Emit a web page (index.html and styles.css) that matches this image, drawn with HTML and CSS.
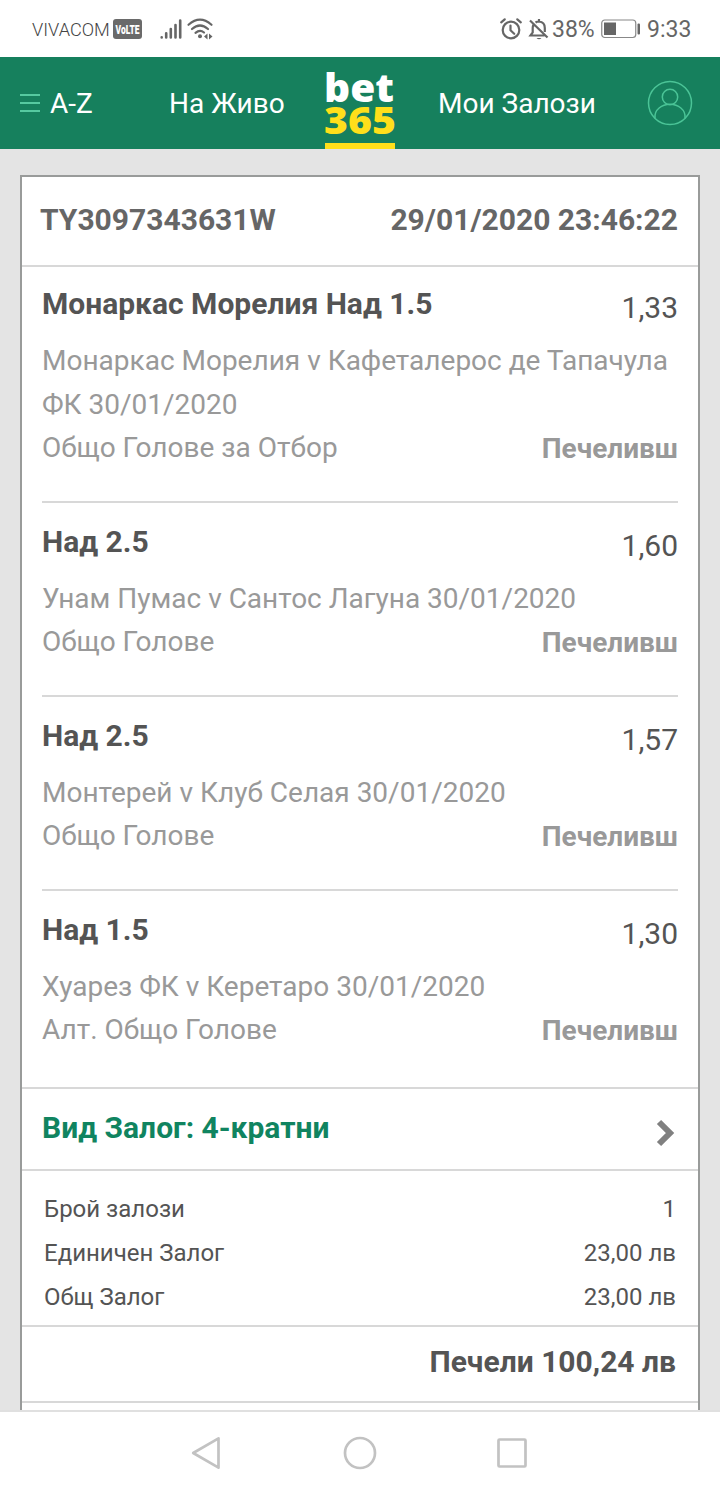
FILE: index.html
```html
<!DOCTYPE html>
<html lang="bg">
<head>
<meta charset="utf-8">
<title>bet365 - Мои Залози</title>
<link rel="stylesheet" href="styles.css">
</head>
<body>
<div class="status">
  <span class="carrier">VIVACOM</span>
  <svg class="volte" width="29" height="20" viewBox="0 0 29 20"><rect width="29" height="20" rx="3" fill="#6a6a6a"/><text x="2.500" y="14.500" textLength="24" lengthAdjust="spacingAndGlyphs" class="volte-text">VoLTE</text></svg>
  <svg class="signal" width="22" height="20" viewBox="0 0 22 20" stroke="#666" stroke-width="2.600" stroke-linecap="round"><path d="M1.700 18.400v.1M6.200 14.300v4.200M10.800 10v8.500M15.500 6v12.500M20.200 1.500v17"/></svg>
  <svg class="wifi" width="27" height="22" viewBox="0 0 27 22" fill="none" stroke="#666" stroke-width="2.200" stroke-linecap="round"><path d="M1.500 6.800Q13 -3.500 24.500 6.800M5 11Q13 4 21 11M8.500 14.800Q13 11 17 14.500"/><circle cx="13" cy="18.300" r="2" fill="#666" stroke="none"/><path fill="#666" stroke="none" d="M17 18.500l3.500-3v6zM22 15.500l3.500 3-3.500 3z"/></svg>
  <span class="spacer"></span>
  <svg class="alarm" width="22" height="22" viewBox="0 0 22 22" fill="none" stroke="#666" stroke-width="2.200" stroke-linecap="round" stroke-linejoin="round"><circle cx="11" cy="12" r="8.300"/><path d="M10.500 7.500v4.800l3.700 3.500M1.200 4.300l3.500-3M20.800 4.300l-3.500-3"/></svg>
  <svg class="bell" width="20" height="22" viewBox="0 0 20 22" fill="none" stroke="#666" stroke-width="2.200"><path d="M1 2.500l17.500 17M4.500 6.500Q3.700 8 3.700 10v4.500L1.500 17.500h14M6.500 4.500Q8 3.500 10 3.500q5.800.5 5.800 6.500v4M10 1v2.500"/><path d="M7.500 20h5q-2.500 2.500-5 0z" fill="#666" stroke="none"/></svg>
  <span class="percent">38%</span>
  <svg class="battery" width="40" height="20" viewBox="0 0 40 20"><rect x=".75" y="1" width="34" height="17.500" rx="3" fill="none" stroke="#888" stroke-width="1.200"/><rect x="3" y="3.500" width="12" height="12.500" fill="#666"/><rect x="36.500" y="4.500" width="2.500" height="11" rx="1" fill="#666"/></svg>
  <span class="clock">9:33</span>
</div>
<header class="header">
  <svg class="menu" width="20" height="20" viewBox="0 0 20 20" stroke="#56c9a0" stroke-width="2"><path d="M0 2h20M0 10h20M0 18h20"/></svg>
  <span class="az">A-Z</span>
  <span class="live">На Живо</span>
  <div class="logo">
    <svg width="70" height="86" viewBox="0 0 70 86"><text class="logo-text" x="-1" y="44.500" textLength="70" lengthAdjust="spacingAndGlyphs" fill="#fff">bet</text><text class="logo-text digits" x="-1" y="77" textLength="72" lengthAdjust="spacingAndGlyphs" fill="#ffdf1b">365</text></svg>
  </div>
  <span class="mybets">Мои Залози</span>
  <svg class="user" width="46" height="46" viewBox="0 0 46 46" fill="none" stroke="#4bc497" stroke-width="1.500"><circle cx="23" cy="23" r="21.500"/><circle cx="23" cy="17" r="7.700"/><path d="M8 38.200C7 29.500 15 24.300 23 24.300S39 29.500 38 38.200"/></svg>
</header>
<main class="page">
  <section class="card">
    <div class="ref"><span>TY3097343631W</span><span class="date">29/01/2020 23:46:22</span></div>
    <div class="legs">
      <article class="leg first">
        <div class="pick"><b>Монаркас Морелия Над 1.5</b><span class="odds">1,33</span></div>
        <div class="match">Монаркас Морелия v Кафеталерос де Тапачула ФК 30/01/2020</div>
        <div class="market"><span class="market-name">Общо Голове за Отбор</span><b>Печеливш</b></div>
      </article>
      <article class="leg">
        <div class="pick"><b>Над 2.5</b><span class="odds">1,60</span></div>
        <div class="match">Унам Пумас v Сантос Лагуна 30/01/2020</div>
        <div class="market"><span class="market-name">Общо Голове</span><b>Печеливш</b></div>
      </article>
      <article class="leg">
        <div class="pick"><b>Над 2.5</b><span class="odds">1,57</span></div>
        <div class="match">Монтерей v Клуб Селая 30/01/2020</div>
        <div class="market"><span class="market-name">Общо Голове</span><b>Печеливш</b></div>
      </article>
      <article class="leg last">
        <div class="pick"><b>Над 1.5</b><span class="odds">1,30</span></div>
        <div class="match">Хуарез ФК v Керетаро 30/01/2020</div>
        <div class="market"><span class="market-name">Алт. Общо Голове</span><b>Печеливш</b></div>
      </article>
    </div>
    <div class="type"><b>Вид Залог: 4-кратни</b><svg width="20" height="28" viewBox="0 0 20 28" fill="none" stroke="#808080" stroke-width="6"><path d="M3 3l11 11L3 25"/></svg></div>
    <div class="stakes">
      <div class="stake"><span>Брой залози</span><span>1</span></div>
      <div class="stake"><span>Единичен Залог</span><span>23,00 лв</span></div>
      <div class="stake"><span>Общ Залог</span><span>23,00 лв</span></div>
    </div>
    <div class="total">Печели 100,24 лв</div>
  </section>
</main>
<nav class="nav">
  <svg width="30" height="34" viewBox="0 0 30 34"><path d="M2.200 17L27.500 2.300v29.400z"/></svg>
  <svg width="34" height="34" viewBox="0 0 34 34"><circle cx="18" cy="17" r="15"/></svg>
  <svg width="30" height="30" viewBox="0 0 30 30"><rect x="1.500" y="1.500" width="27" height="27" rx="1"/></svg>
</nav>
</body>
</html>
```

FILE: styles.css
```css
* { box-sizing: border-box; }
body {
  margin: 0;
  height: 1496px;
  display: flex;
  flex-direction: column;
  overflow: hidden;
  background: #fff;
  color: #545454;
  font-family: Roboto, "Liberation Sans", sans-serif;
}
svg { display: block; flex: none; overflow: visible; }
span, b { white-space: nowrap; }

.status { height: 57px; flex: none; display: flex; align-items: center; padding: 1px 27px 0 32px; color: #666; }
.carrier { width: 81px; font-size: 18.200px; font-weight: 300; color: #444; }
.volte-text { font: 900 12.500px Roboto, sans-serif; fill: #fff; }
.signal { margin-left: 18px; }
.wifi { margin-left: 5px; }
.spacer { flex: 1; }
.alarm { margin-right: -1px; }
.bell { margin-left: 8px; }
.percent { margin-left: 3px; width: 49px; font-size: 23px; }
.clock { width: 46px; margin-left: 6px; font-size: 23px; }

.header { height: 92px; flex: none; display: flex; align-items: center; padding: 0 27px 0 20px; background: #16805d; color: #fff; font-size: 28px; }
.az { margin-left: 10px; width: 119px; }
.live { width: 156px; }
.logo { align-self: stretch; width: 70px; border-bottom: 6px solid #ffdf1b; }
.logo-text { font: 900 39px "Open Sans", "Noto Sans", sans-serif; }
.digits { font-size: 37px; }
.mybets { margin-left: 43px; flex: 1; }

.page { flex: 1; min-height: 0; overflow: hidden; padding: 26px 20px 0; background: #e4e4e4; }
.card { height: 1300px; border: 2px solid #999b9a; background: #fff; }
.ref { height: 90px; display: flex; align-items: center; justify-content: space-between; padding: 0 20px 4px 18px; border-bottom: 2px solid #d8d8d8; color: #666; font-size: 30px; font-weight: 700; }
.legs { padding: 0 20px; border-bottom: 2px solid #d8d8d8; }
.leg { padding: 17px 0 30px; border-bottom: 2px solid #d8d8d8; line-height: 44px; font-size: 28px; color: #999; }
.first { padding-top: 15px; }
.last { padding-bottom: 34px; border-bottom: 0; }
.pick { height: 57px; display: flex; justify-content: space-between; color: #545454; font-size: 30px; }
.odds { padding-top: 4px; }
.market { display: flex; justify-content: space-between; }
.market-name { margin-top: -1px; }
.type { height: 82px; display: flex; align-items: center; justify-content: space-between; padding: 0 22px 0 20px; border-bottom: 2px solid #d8d8d8; color: #108460; font-size: 30px; }
.type b { padding-bottom: 4px; }
.type svg { margin-top: 8px; }
.stakes { height: 156px; padding: 16px 22px 0; border-bottom: 2px solid #d8d8d8; font-size: 24px; line-height: 44px; }
.stake { display: flex; justify-content: space-between; }
.total { height: 76px; padding-right: 22px; border-bottom: 2px solid #d8d8d8; text-align: right; font-size: 30px; font-weight: 700; line-height: 70px; }

.nav { height: 86px; flex: none; display: flex; align-items: center; justify-content: space-between; padding: 0 193px 2px 191px; border-top: 2px solid #e0e0e0; }
.nav svg { fill: none; stroke: #c2c2c2; stroke-width: 2.700; stroke-linejoin: round; }
```
